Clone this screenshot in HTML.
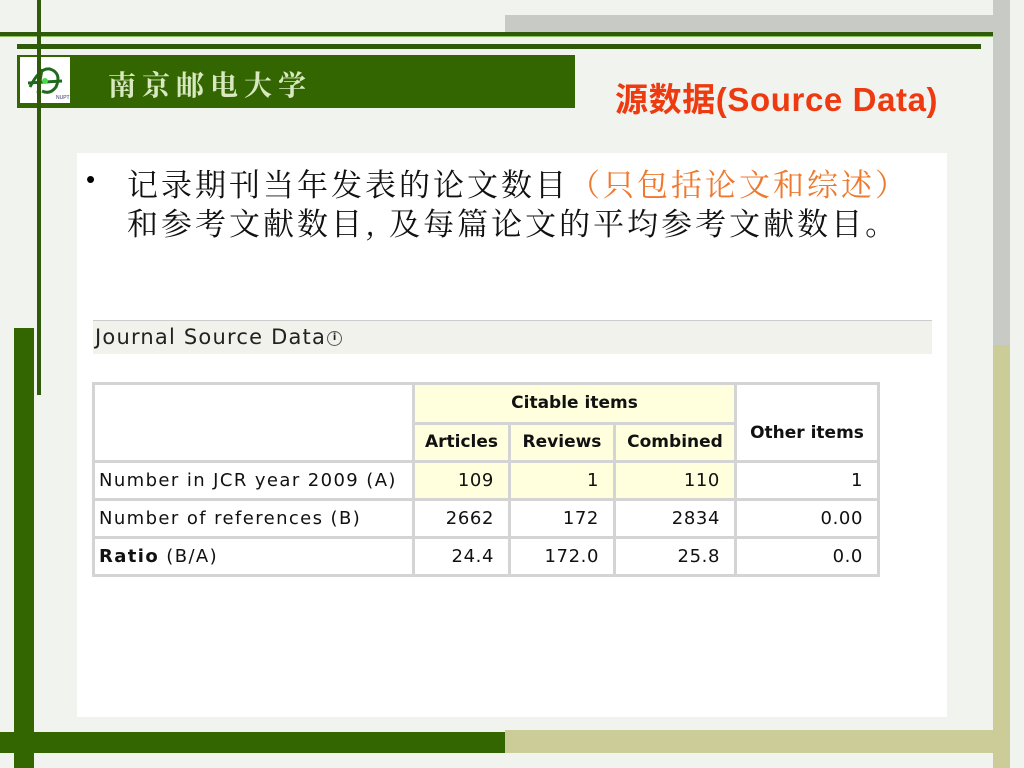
<!DOCTYPE html>
<html><head><meta charset="utf-8">
<style>
*{margin:0;padding:0;box-sizing:border-box}
body{width:1024px;height:768px;background:#f0f3ee;position:relative;overflow:hidden;font-family:"Liberation Sans","Noto Sans CJK SC",sans-serif}
.a{position:absolute}
table{border-collapse:collapse;table-layout:fixed;font-family:"DejaVu Sans","Liberation Sans",sans-serif;font-size:18px;color:#111;width:785px}
td{border:3px solid #d4d4d4;height:38px;padding:0 4px;letter-spacing:0.6px;white-space:nowrap;overflow:hidden}
td.l{letter-spacing:1.4px}
td.y{background:#ffffdd}
td.n{text-align:right;padding-right:14px}
td.h{text-align:center;font-weight:bold;font-size:17px;letter-spacing:0}
</style></head><body>
<div class="a" style="left:505px;top:15px;width:505px;height:18px;background:#c8cac6"></div>
<div class="a" style="left:993px;top:0;width:17px;height:345px;background:#c8cac6"></div>
<div class="a" style="left:993px;top:345px;width:17px;height:423px;background:#cccc99"></div>
<div class="a" style="left:0;top:32px;width:993px;height:5px;background:#2f5a0a;border-bottom:1px solid #8fc060"></div>
<div class="a" style="left:17px;top:44px;width:964px;height:5px;background:#2f5a0a"></div>
<div class="a" style="left:17px;top:55px;width:558px;height:53px;background:#336600"></div>
<div class="a" style="left:20px;top:57px;width:50px;height:46px;background:#fff">
<svg width="50" height="46" viewBox="0 0 50 46"><path d="M10 30 Q20 10 30 12 Q42 16 36 30 Q30 38 22 34" fill="none" stroke="#1f6a1f" stroke-width="3"/><path d="M8 26 L42 24" stroke="#1f6a1f" stroke-width="3"/><path d="M22 12 L18 36" stroke="#1f6a1f" stroke-width="3"/><circle cx="25" cy="24" r="3" fill="#44dd44"/><text x="36" y="42" font-size="5" fill="#336">NUPT</text></svg>
</div>
<div class="a" style="left:108px;top:64px;color:#d8e8c0;font-family:'Noto Serif CJK SC',serif;font-size:28px;letter-spacing:6px;font-weight:bold">南京邮电大学</div>
<div class="a" style="left:37px;top:0;width:4px;height:395px;background:#2f5a0a"></div>
<div class="a" style="left:14px;top:328px;width:20px;height:440px;background:#336600"></div>
<div class="a" style="left:615px;top:73px;color:#ee3a10;font-size:33px;font-weight:bold;white-space:nowrap;letter-spacing:0.6px">源数据(Source Data)</div>
<div class="a" style="left:77px;top:153px;width:870px;height:564px;background:#fff"></div>
<div class="a" style="left:86px;top:164px;font-size:26px;color:#000">•</div>
<div class="a" style="left:127px;top:163px;font-family:'Noto Serif CJK SC',serif;font-size:31px;line-height:39px;color:#111;white-space:nowrap;letter-spacing:3px">记录期刊当年发表的论文数目<span style="color:#ee7a30">（只包括论文和综述）</span><br>和参考文献数目, 及每篇论文的平均参考文献数目。</div>
<div class="a" style="left:93px;top:320px;width:839px;height:34px;background:#f2f2ec;border-top:1px solid #ccc"></div>
<div class="a" style="left:95px;top:325px;font-family:'DejaVu Sans',sans-serif;font-size:21px;letter-spacing:1.2px;color:#222">Journal Source Data<span style="display:inline-block;width:15px;height:15px;border:1.5px solid #555;border-radius:50%;font-size:10px;text-align:center;line-height:12px;vertical-align:4px;margin-left:1px;font-weight:bold;letter-spacing:0">i</span></div>
<table class="a" style="left:92px;top:382px">
<colgroup><col style="width:320px"><col style="width:96px"><col style="width:105px"><col style="width:121px"><col style="width:143px"></colgroup>
<tr><td rowspan="2" style="height:78px"></td><td colspan="3" class="y h" style="height:39px">Citable items</td><td rowspan="2" class="h" style="padding-top:20px">Other items</td></tr>
<tr><td class="y h" style="padding:0 2px">Articles</td><td class="y h" style="padding:0 2px">Reviews</td><td class="y h" style="padding:0 2px">Combined</td></tr>
<tr><td class="l">Number in JCR year 2009 (A)</td><td class="y n">109</td><td class="y n">1</td><td class="y n">110</td><td class="n">1</td></tr>
<tr><td class="l">Number of references (B)</td><td class="n">2662</td><td class="n">172</td><td class="n">2834</td><td class="n">0.00</td></tr>
<tr><td class="l"><b>Ratio</b> (B/A)</td><td class="n">24.4</td><td class="n">172.0</td><td class="n">25.8</td><td class="n">0.0</td></tr>
</table>
<div class="a" style="left:505px;top:730px;width:488px;height:23px;background:#cccc99"></div>
<div class="a" style="left:0;top:732px;width:505px;height:21px;background:#336600"></div>
<div class="a" style="left:14px;top:700px;width:20px;height:68px;background:#336600"></div>
</body></html>
